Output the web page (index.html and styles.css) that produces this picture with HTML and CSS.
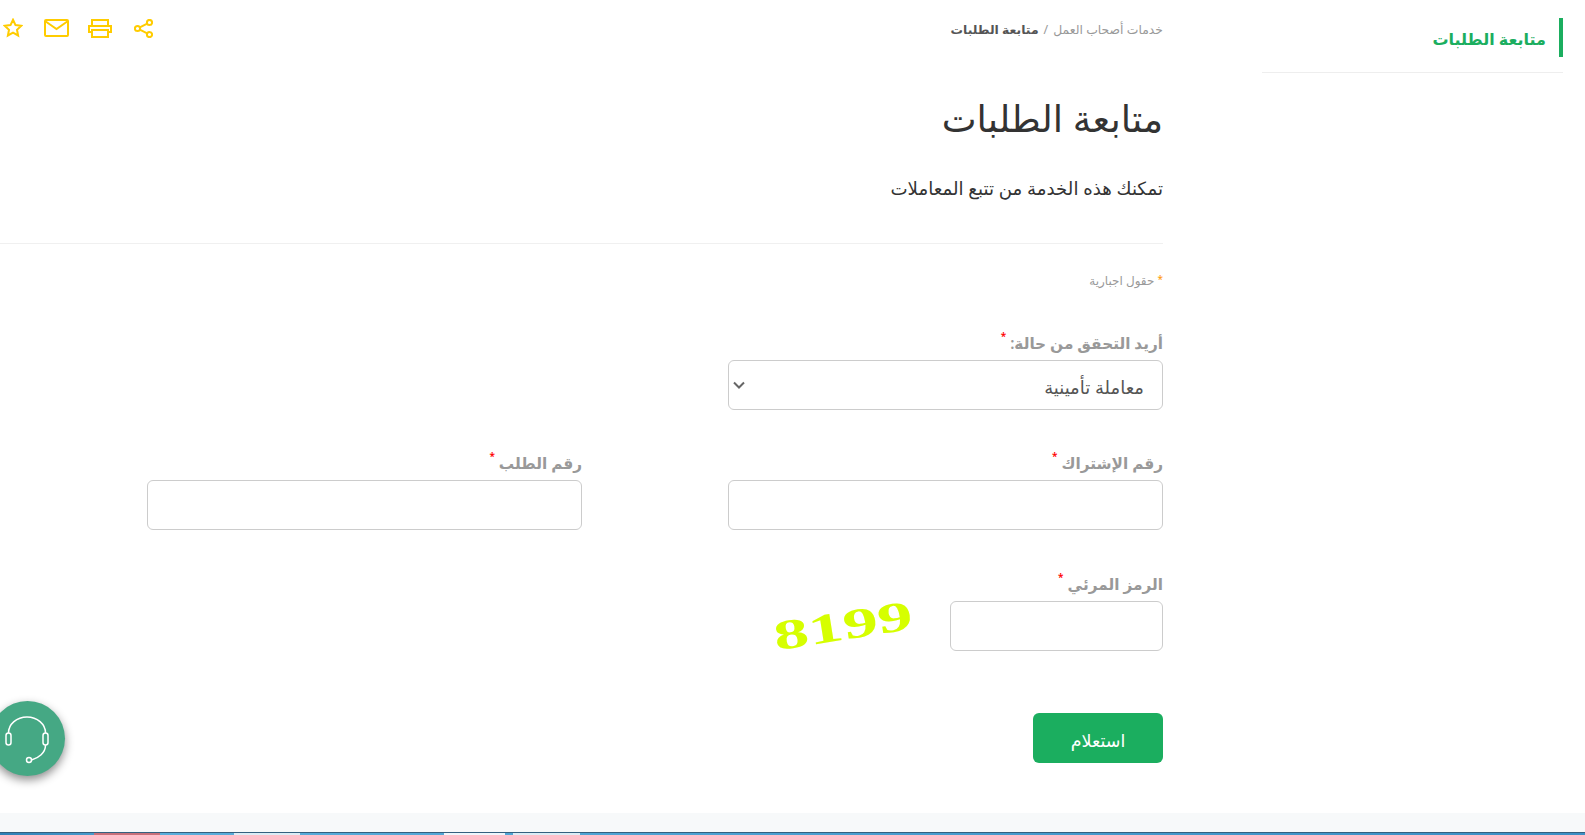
FILE: index.html
```html
<!DOCTYPE html>
<html lang="ar" dir="rtl">
<head>
  <meta charset="UTF-8">
  <title>متابعة الطلبات</title>
  <link rel="stylesheet" href="styles.css">
</head>
<body>
  <div class="page">
    <aside class="sidebar">
      <div class="side-title">متابعة الطلبات</div>
    </aside>

    <main class="content">
      <div class="topbar">
        <div class="breadcrumb">
          <span>خدمات أصحاب العمل</span>
          <span class="sep">/</span>
          <strong>متابعة الطلبات</strong>
        </div>
        <div class="tools">
          <svg class="tool" width="19" height="19" viewBox="0 0 19 19"><circle cx="15.5" cy="3.5" r="2.6"/><circle cx="15.5" cy="15.5" r="2.6"/><circle cx="3.5" cy="9.5" r="2.6"/><path d="M5.8 8.3l7.4-3.700M5.8 10.700l7.4 3.700"/></svg>
          <svg class="tool tool-print" width="24" height="19" viewBox="0 0 24 19"><path d="M4 7V1h16v6"/><path d="M4 13H1V7h22v6h-3"/><path d="M4 11h16v7H4z"/></svg>
          <svg class="tool" width="25" height="18" viewBox="0 0 25 18"><rect x="1" y="1" width="23" height="16" rx="1"/><path d="M1 2l11.500 8L24 2"/></svg>
          <svg class="tool" width="20" height="20" viewBox="0 0 20 20"><path d="M10 1.800l2.500 5.300 5.800.7-4.300 4 1.100 5.700L10 14.700l-5.100 2.800L6 11.800l-4.300-4 5.800-.7z"/></svg>
        </div>
      </div>

      <h1 class="page-title">متابعة الطلبات</h1>
      <p class="page-desc">تمكنك هذه الخدمة من تتبع المعاملات</p>

      <p class="required-note"><span class="note-star">*</span> حقول اجبارية</p>

      <form class="form">
        <div class="row">
          <div class="field">
            <label class="label">أريد التحقق من حالة: <span class="star">*</span></label>
            <div class="select-wrap">
              <select class="control select">
                <option>معاملة تأمينية</option>
              </select>
              <svg class="chevron" width="12" height="8" viewBox="0 0 12 8"><path d="M1 1.500l5 5 5-5"/></svg>
            </div>
          </div>
        </div>

        <div class="row">
          <div class="field">
            <label class="label">رقم الإشتراك <span class="star">*</span></label>
            <input class="control" type="text">
          </div>
          <div class="field">
            <label class="label">رقم الطلب <span class="star">*</span></label>
            <input class="control" type="text">
          </div>
        </div>

        <div class="row row-captcha">
          <div class="field">
            <label class="label">الرمز المرئي <span class="star">*</span></label>
            <div class="captcha-row">
              <input class="control captcha-input" type="text">
              <div class="captcha" dir="ltr">8199</div>
            </div>
          </div>
        </div>

        <button class="submit" type="button">استعلام</button>
      </form>
    </main>
  </div>

  <div class="footer-band"></div>
  <div class="taskbar">
    <span class="task task-red"></span>
    <span class="task task-a"></span>
    <span class="task task-b"></span>
    <span class="task task-c"></span>
  </div>

  <div class="help">
    <svg width="75" height="75" viewBox="-10 0 75 75"><path d="M8.500 32A18.500 16 0 0 1 45.500 32"/><rect x="6" y="32" width="5" height="12" rx="2.500"/><rect x="43" y="32" width="5" height="12" rx="2.500"/><path d="M45.500 44c0 8-7 13-14 15"/><circle cx="29" cy="59" r="2.500"/></svg>
  </div>
</body>
</html>
```

FILE: styles.css
```css
* {
  box-sizing: border-box;
}

html, body {
  margin: 0;
  padding: 0;
  height: 835px;
  overflow: hidden;
}

body {
  font-family: "Noto Sans", "DejaVu Sans", sans-serif;
  background: white;
  color: #333;
  position: relative;
  display: flex;
  flex-direction: column;
}

.page {
  flex: 1;
  display: flex;
  gap: 99px;
  padding-right: 22px;
}

/* right column */
.sidebar {
  width: 301px;
  flex-shrink: 0;
  padding-top: 18px;
}

.side-title {
  position: relative;
  height: 55px;
  padding: 10px 17px 0 0;
  border-bottom: 1px solid #eee;
  color: #1bae5f;
  font-size: 16px;
  font-weight: 700;
}

.side-title::before {
  content: "";
  position: absolute;
  top: 0;
  right: 0;
  width: 4px;
  height: 39px;
  background: #1bae5f;
}

.content {
  flex: 1;
  min-width: 0;
}

.topbar {
  height: 60px;
  display: flex;
  justify-content: space-between;
  align-items: flex-start;
  padding-top: 18px;
}

.breadcrumb {
  margin-top: 3px;
  font-size: 12.4px;
  color: #999;
  display: flex;
  gap: 5px;
}

.breadcrumb strong {
  color: #555;
  font-weight: 700;
}

.tools {
  display: flex;
  align-items: center;
  gap: 21px;
  padding-left: 3px;
}

.tool {
  fill: none;
  stroke: #fc0;
  stroke-width: 2;
}

.tool-print {
  margin-left: -2px;
  margin-right: 1px;
}

.page-title {
  margin: 28px 0 0;
  height: 60px;
  font-size: 37px;
  font-weight: 400;
  color: #333;
  line-height: 60px;
}

.page-desc {
  margin: 0;
  height: 96px;
  padding-top: 28px;
  border-bottom: 1px solid #f0f0f0;
  font-size: 18.2px;
  color: #333;
}

.required-note {
  margin: 28px 0 0;
  font-size: 12px;
  color: #999;
}

.note-star {
  color: #f90;
  font-size: 10px;
  vertical-align: 2px;
}

.form {
  padding-left: 147px;
  margin-top: 43px;
}

.row {
  display: grid;
  grid-template-columns: 435px 435px;
  justify-content: space-between;
  margin-bottom: 42px;
}

.row-captcha {
  padding-top: 1px;
}

.label {
  display: block;
  height: 29px;
  margin-top: -1px;
  font-size: 15.3px;
  line-height: 18px;
  font-weight: 600;
  color: #999;
}

.star {
  color: red;
  font-size: 10px;
  line-height: 10px;
  vertical-align: 9px;
}

.control {
  display: block;
  width: 100%;
  height: 50px;
  padding: 0 18px;
  border: 1px solid #ccc;
  border-radius: 6px;
  background: white;
  font-family: inherit;
  font-size: 16px;
  color: #555;
}

.select-wrap {
  position: relative;
}

.select {
  appearance: none;
  font-size: 18px;
  padding-top: 4px;
}

.chevron {
  position: absolute;
  left: 5px;
  top: 21px;
  fill: none;
  stroke: #666;
  stroke-width: 2;
  pointer-events: none;
}

.captcha-row {
  display: flex;
  align-items: center;
}

.captcha-input {
  width: 213px;
}

.captcha {
  width: 80px;
  margin-right: 67px;
  color: #d6ff00;
  font-family: "Liberation Serif", serif;
  font-size: 40px;
  font-weight: 700;
  line-height: 50px;
  text-align: center;
  transform: rotate(-9deg) scale(1.75, 1.05);
}

.submit {
  display: block;
  width: 130px;
  height: 50px;
  margin-top: 62px;
  padding-top: 4px;
  border: none;
  border-radius: 6px;
  background: #1bae5f;
  color: white;
  font-family: inherit;
  font-size: 17.5px;
}

.footer-band {
  height: 19px;
  background: #f7f9fa;
}

.taskbar {
  height: 3px;
  display: flex;
  background: linear-gradient(90deg, #2f7fb5, #5aaedb 10%, #4a9fd0 50%, #3c8fc4);
  border-top: 1px solid #34607f;
}

.task {
  height: 2px;
  position: absolute;
  bottom: 0;
}

.task-red {
  right: 1425px;
  width: 66px;
  background: #c8707a;
}

.task-a {
  right: 1285px;
  width: 66px;
  background: #dcecf5;
}

.task-b {
  right: 1080px;
  width: 61px;
  background: #eef6fb;
}

.task-c {
  right: 1005px;
  width: 67px;
  background: #dcecf5;
}

/* floating help button */
.help {
  position: absolute;
  left: -10px;
  top: 701px;
  width: 75px;
  height: 75px;
  border-radius: 50%;
  background: #45a884;
  box-shadow: 0 4px 10px rgba(0, 0, 0, 0.45);
}

.help svg {
  fill: none;
  stroke: white;
  stroke-width: 1.500;
  display: block;
}
```
